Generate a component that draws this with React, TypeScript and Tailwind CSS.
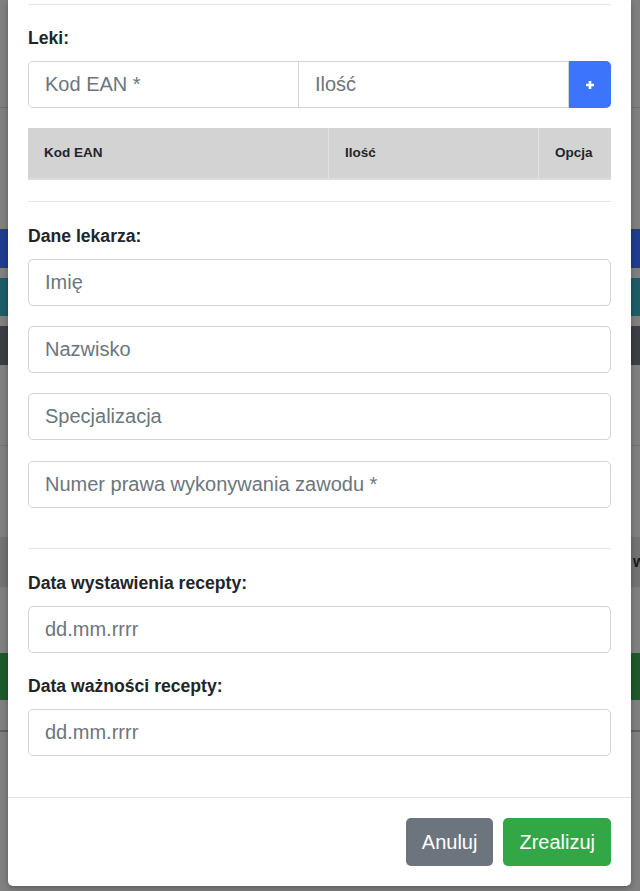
import React from "react";

const font = { fontFamily: '"Liberation Sans", Arial, Helvetica, sans-serif' };

function Field({ placeholder, className = "" }: { placeholder: string; className?: string }) {
  return (
    <input
      type="text"
      placeholder={placeholder}
      className={
        "block w-full h-[47px] rounded-[5px] border border-[#ced4da] bg-white px-[16px] text-[20px] text-[#495057] placeholder:text-[#6c757d] outline-none " +
        className
      }
    />
  );
}

function Label({ children, className = "" }: { children: React.ReactNode; className?: string }) {
  return (
    <div className={"text-[17.6px] leading-[26px] font-bold text-[#212529] " + className}>{children}</div>
  );
}

export default function App() {
  return (
    <div className="relative w-[640px] h-[891px] overflow-hidden bg-[#808080]" style={font}>
      {/* background page (dimmed by overlay) */}
      <div className="flex flex-col w-full">
        <div className="h-[107px]" />
        <div className="h-[1px] bg-[#717171]" />
        <div className="h-[121px]" />
        <div className="h-[39px] bg-[#1f3c8f]" />
        <div className="h-[10px]" />
        <div className="h-[38px] bg-[#1e5d66]" />
        <div className="h-[10px]" />
        <div className="h-[39px] bg-[#3b3e43]" />
        <div className="h-[80px]" />
        <div className="h-[1px] bg-[#737373]" />
        <div className="h-[91px]" />
        <div className="h-[50px] bg-[#737373] flex items-center pl-[633px] text-[16px] font-bold text-[#1a1a1a] whitespace-nowrap overflow-hidden">
          w
        </div>
        <div className="h-[66px]" />
        <div className="h-[47px] bg-[#1e5a2b]" />
        <div className="h-[30px]" />
        <div className="h-[2px] bg-[#606060]" />
      </div>

      {/* modal */}
      <div className="absolute left-[8px] top-0 w-[623px] bg-white rounded-b-[5px] shadow-[0_2px_6px_rgba(0,0,0,0.3)]">
        <div className="px-[20px] pt-[4px]">
          <div className="h-[1px] bg-[#e6e6e6]" />
          <Label className="mt-[20px] mb-[10px]">Leki:</Label>
          <div className="flex h-[47px]">
            <input
              type="text"
              placeholder="Kod EAN *"
              className="block w-[271px] h-[47px] rounded-l-[5px] border border-[#ced4da] bg-white px-[16px] text-[20px] placeholder:text-[#6c757d] outline-none"
            />
            <input
              type="text"
              placeholder="Ilość"
              className="block w-[271px] h-[47px] -ml-[1px] border border-[#ced4da] bg-white px-[16px] text-[20px] placeholder:text-[#6c757d] outline-none"
            />
            <button className="flex-1 h-[47px] rounded-r-[5px] bg-[#3c74fc] flex items-center justify-center">
              <svg width="10" height="10" viewBox="0 0 10 10">
                <path d="M5 1v8M1 5h8" stroke="white" strokeWidth="2.6" strokeLinecap="butt" />
              </svg>
            </button>
          </div>

          <div className="mt-[20px] flex h-[52px] bg-[#d3d3d3] border-b-[2px] border-[#dcdcdc] text-[13.5px] font-bold text-[#212529]">
            <div className="w-[301px] flex items-center px-[16px] border-r border-[#dfe2e6]">Kod EAN</div>
            <div className="w-[210px] flex items-center px-[16px] border-r border-[#dfe2e6]">Ilość</div>
            <div className="flex-1 flex items-center px-[16px]">Opcja</div>
          </div>

          <div className="mt-[21px] h-[1px] bg-[#e6e6e6]" />
          <Label className="mt-[21px] mb-[10px]">Dane lekarza:</Label>
          <Field placeholder="Imię" />
          <Field placeholder="Nazwisko" className="mt-[20px]" />
          <Field placeholder="Specjalizacja" className="mt-[20px]" />
          <Field placeholder="Numer prawa wykonywania zawodu *" className="mt-[21px]" />

          <div className="mt-[40px] h-[1px] bg-[#e6e6e6]" />
          <Label className="mt-[21px] mb-[10px]">Data wystawienia recepty:</Label>
          <Field placeholder="dd.mm.rrrr" />
          <Label className="mt-[20px] mb-[10px]">Data ważności recepty:</Label>
          <Field placeholder="dd.mm.rrrr" />
          <div className="h-[41px]" />
        </div>
        <div className="border-t border-[#e3e3e3] px-[20px] pt-[20px] pb-[20px] flex justify-end gap-[10px]">
          <button className="h-[48px] px-[16px] rounded-[5px] bg-[#6c757d] text-white text-[20px]">Anuluj</button>
          <button className="h-[48px] px-[16px] rounded-[5px] bg-[#33a745] text-white text-[20px]">Zrealizuj</button>
        </div>
      </div>
    </div>
  );
}
